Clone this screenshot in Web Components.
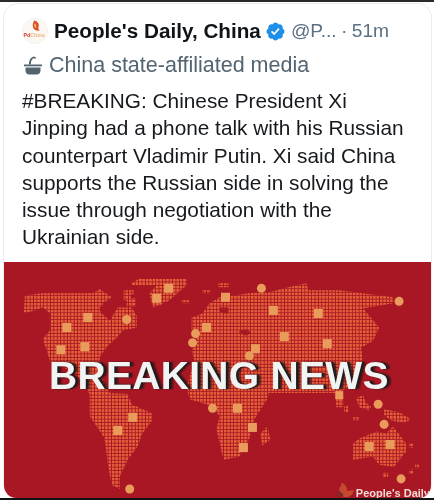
<!DOCTYPE html>
<html>
<head>
<meta charset="utf-8">
<style>
  html, body { margin: 0; padding: 0; background: #fff; }
  body { width: 434px; height: 500px; overflow: hidden; font-family: "Liberation Sans", Arial, sans-serif; }
</style>
</head>
<body>
<tweet-card>
  <tweet-head name="People's Daily, China" handle="@P..." time="51m"></tweet-head>
  <media-label>China state-affiliated media</media-label>
  <tweet-text>#BREAKING: Chinese President Xi<br>Jinping had a phone talk with his Russian<br>counterpart Vladimir Putin. Xi said China<br>supports the Russian side in solving the<br>issue through negotiation with the<br>Ukrainian side.</tweet-text>
  <news-image headline="BREAKING NEWS" credit="People's Daily"></news-image>
</tweet-card>

<script>
class TweetCard extends HTMLElement {
    constructor() {
        super();
        this.attachShadow({ mode: 'open' });
        this.shadowRoot.innerHTML = `
            <style>
                :host {
                    display: block;
                    height: 500px;
                    box-sizing: border-box;
                    border-top: 2px solid #2a2a2a;
                    border-bottom: 2px solid #111;
                    padding: 1px 2px 0 3px;
                    background: #fff;
                    filter: blur(0.4px);
                }
                .card {
                    height: 100%;
                    box-sizing: border-box;
                    border: 1px solid #ececec;
                    border-bottom: 0;
                    border-radius: 15px 15px 13px 13px;
                    display: flex;
                    flex-direction: column;
                    overflow: hidden;
                }
            </style>
            <div class="card"><slot></slot></div>
        `;
    }
}

class TweetHead extends HTMLElement {
    constructor() {
        super();
        this.attachShadow({ mode: 'open' });
        this.shadowRoot.innerHTML = `
            <style>
                :host {
                    display: flex;
                    align-items: center;
                    height: 26px;
                    padding: 14px 0 0 18px;
                    font-size: 20.7px;
                    white-space: nowrap;
                }
                .logo { width: 26px; height: 26px; flex: none; margin-right: 6px; }
                .name { font-weight: bold; color: #0f1419; }
                .tick { width: 21px; height: 21px; flex: none; margin: 0 5px 0 4px; }
                .meta { color: #5b7083; font-size: 19.2px; word-spacing: -1px; }
            </style>
            <svg class="logo" viewBox="0 0 26 26">
                <circle cx="13" cy="13" r="12.6" fill="#fbf8f4" stroke="#f0ebe5" stroke-width=".6"/>
                <path d="M12 2.500c3.600.5 5.600 3.300 4.600 6.300-.5 1.500-.1 2.800 1 3.900-3 .5-6-.8-6.700-3.700-.6-2.500.5-4.800 1.100-6.500z" fill="#d9542b"/>
                <path d="M12.500 5.500c1.800.8 2.100 2.600 1 4.400-1.100-.9-1.700-2.600-1-4.400z" fill="#f3c16c"/>
                <text x="1.600" y="18.600" font-size="5.200" font-weight="bold" font-family="Liberation Sans, sans-serif"><tspan fill="#d23a2a">Pd</tspan><tspan fill="#eab985">China</tspan></text>
            </svg>
            <span class="name"></span>
            <svg class="tick" viewBox="0 0 24 24"><path fill="#1d8fe8" d="M22.25 12c0-1.43-.88-2.67-2.19-3.34.46-1.39.2-2.9-.81-3.91s-2.52-1.27-3.91-.81c-.66-1.31-1.91-2.19-3.34-2.19s-2.67.88-3.33 2.19c-1.4-.46-2.91-.2-3.92.81s-1.26 2.52-.8 3.91c-1.31.67-2.2 1.91-2.2 3.34s.89 2.67 2.2 3.34c-.46 1.39-.21 2.9.8 3.91s2.52 1.26 3.91.81c.67 1.31 1.91 2.19 3.34 2.19s2.68-.88 3.34-2.19c1.39.45 2.9.2 3.91-.81s1.27-2.52.81-3.91c1.31-.67 2.19-1.91 2.19-3.34zm-11.71 4.2L6.8 12.46l1.41-1.42 2.26 2.26 4.8-5.23 1.47 1.36-6.2 6.77z"/></svg>
            <span class="meta"></span>
        `;
    }

    connectedCallback() {
        this.shadowRoot.querySelector('.name').textContent = this.getAttribute('name');
        this.shadowRoot.querySelector('.meta').textContent = `${this.getAttribute('handle')} · ${this.getAttribute('time')}`;
    }
}

class MediaLabel extends HTMLElement {
    constructor() {
        super();
        this.attachShadow({ mode: 'open' });
        this.shadowRoot.innerHTML = `
            <style>
                :host {
                    display: flex;
                    align-items: center;
                    height: 26px;
                    padding: 8px 0 0 20px;
                    font-size: 21.5px;
                    color: #536471;
                    white-space: nowrap;
                }
                svg { width: 18px; height: 19px; flex: none; margin-right: 7px; }
            </style>
            <svg viewBox="0 0 18 19">
                <path d="M5 8.500c-.4-3.400 1.200-6.600 4.500-8l2.500.8-.6 1.500-1.700-.5c-2.200 1.100-3 3.300-2.700 6.200z" fill="#536471"/>
                <rect x="0" y="8.500" width="18" height="1.800" fill="#536471"/>
                <path d="M1.500 11.500h15v3.200c0 2.300-1.600 3.800-3.800 3.800H5.300c-2.200 0-3.800-1.500-3.800-3.800z" fill="#536471"/>
            </svg>
            <span><slot></slot></span>
        `;
    }
}

class TweetText extends HTMLElement {
    constructor() {
        super();
        this.attachShadow({ mode: 'open' });
        this.shadowRoot.innerHTML = `
            <style>
                :host {
                    display: block;
                    padding: 9px 0 0 18px;
                    height: 175px;
                    font-size: 20.800px;
                    line-height: 27.300px;
                    color: #16191d;
                    white-space: nowrap;
                }
            </style>
            <slot></slot>
        `;
    }
}

class NewsImage extends HTMLElement {
    constructor() {
        super();
        this.attachShadow({ mode: 'open' });
        this.shadowRoot.innerHTML = `
            <style>
                :host {
                    display: block;
                    position: relative;
                    flex: 1;
                    background: #a91724;
                    overflow: hidden;
                }
                svg { display: block; width: 100%; height: 100%; }
                .headline {
                    position: absolute;
                    left: 45px;
                    top: 91px;
                    font-size: 39px;
                    line-height: 46px;
                    font-weight: bold;
                    letter-spacing: .3px;
                    color: #f2f3f3;
                    white-space: nowrap;
                    text-shadow: 2px 0 1px #1d1d1d, 4px 0 2px rgba(20,20,20,.7);
                }
                .credit {
                    position: absolute;
                    right: 1px;
                    bottom: -1px;
                    font-size: 11px;
                    font-weight: bold;
                    color: #f1dcd6;
                    white-space: nowrap;
                }
            </style>
            <svg viewBox="4 262 428 234" preserveAspectRatio="none">
                <defs>
                    <pattern id="dots" patternUnits="userSpaceOnUse" width="3.4" height="3.4">
                        <rect width="2.5" height="2.5" fill="#e5623a"/>
                    </pattern>
                </defs>
                <g fill="url(#dots)">
                    <!-- north america -->
                    <path d="M24 312L25 295 43 293 93 293 100 289 112 297 103 303 102 313 110 320 118 307 132 307 137 315 137 327 123 330 117 337 108 345 100 356 100 372 110 392 128 393 132 403 152 412 152 420 142 433 138 445 128 458 120 475 120 487 112 483 108 462 105 437 90 415 90 393 75 372 50 360 43 338 50 330 50 313 43 307 28 312z"/>
                    <!-- greenland and arctic -->
                    <path d="M132 283L140 278 187 278 187 285 170 300 160 305 153 307 150 293 157 285 132 285z"/>
                    <path d="M124 290h10v4h-3v4h5v8h-9v-6h-3zM182 300h8v3h-8z"/>
                    <!-- eurasia, africa -->
                    <path d="M192 317L203 313 210 303 220 297 250 293 270 292 289 287 307 283 309 290 340 290 394 297 394 303 364 308 380 327 374 340 362 347 364 362 350 385 340 392 300 392 269 392 269 396 255 418 250 437 240 455 224 458 217 428 220 415 213 405 190 398 187 385 195 360 192 350 198 340 192 330z"/>
                    <path d="M268 425L271 438 263 444 261 432zM219 283h10v4h-10zM203 290h8v3h-8z"/>
                    <!-- islands and australia -->
                    <path d="M337 392h7v14h-7zM345 405h4v6h-4zM357 397l7-3 3 8 5 3-2 4-10-3zM354 416h6v3h-6z"/>
                    <path d="M385 408L400 411 412 418 405 422 392 419 385 414z"/>
                    <path d="M354 442L360 437 377 430 387 432 394 425 407 442 407 450 395 465 380 463 374 455 354 458z"/>
                    <path d="M384 471h5v4h-5zM410 442h4v4h-4zM416 463h4v3h-4zM410 468h4v4h-4z"/>
                </g>
                <!-- seas cut out of the land mass -->
                <g fill="#a91724">
                    <path d="M220 307h9v6h-5l-4-2zM240 330l8-1 4 4-6 2-6-2zM248 362l6 2-2 6-5-3z"/>
                    <path d="M100 306h5v5h-5z"/>
                </g>
                <g fill="#e99b5b">
                    <rect x="62.500" y="322.500" width="9" height="9"/><rect x="83.500" y="312.500" width="9" height="9"/>
                    <rect x="56.500" y="344.500" width="9" height="9"/><rect x="80.500" y="341.500" width="9" height="9"/>
                    <rect x="152.500" y="293.500" width="9" height="9"/><rect x="164.500" y="283.500" width="9" height="9"/>
                    <rect x="202.500" y="322.500" width="9" height="9"/><rect x="221.500" y="292.500" width="9" height="9"/>
                    <rect x="269.500" y="305.500" width="9" height="9"/><rect x="314.500" y="308.500" width="9" height="9"/>
                    <rect x="280.500" y="331.500" width="9" height="9"/><rect x="323.500" y="338.500" width="9" height="9"/>
                    <rect x="251.500" y="343.500" width="9" height="9"/><rect x="128.500" y="411.500" width="9" height="9"/>
                    <rect x="113.500" y="424.500" width="9" height="9"/><rect x="233.500" y="402.500" width="9" height="9"/>
                    <rect x="248.500" y="421.500" width="9" height="9"/><rect x="239.500" y="441.500" width="9" height="9"/>
                    <rect x="336" y="390" width="8" height="8"/><rect x="365.500" y="440.500" width="9" height="9"/>
                    <rect x="386.500" y="438.500" width="9" height="9"/>
                    <circle cx="127" cy="319" r="4.500"/><circle cx="196" cy="333" r="4.500"/><circle cx="193" cy="342" r="4.500"/>
                    <circle cx="262" cy="288" r="4.500"/><circle cx="400" cy="301" r="4.500"/><circle cx="250" cy="355" r="4.500"/>
                    <circle cx="130" cy="487" r="4.500"/><circle cx="213" cy="407" r="4.500"/><circle cx="379" cy="403" r="4.500"/>
                    <circle cx="385" cy="423" r="4.500"/><circle cx="402" cy="477" r="4.500"/>
                </g>
                <!-- watermark flame -->
                <path d="M342 481c4 1 6 4 6 8 3 0 5-1 7-1-1 4-4 7-8 7-5 0-7-3-7-7 0-3 3-4 2-7z" fill="#c4492f"/>
                <path d="M340 489c-2 2-2 5 1 6 2 .5 3-1 3-3z" fill="#7c2a2a"/>
            </svg>
            <div class="headline"></div>
            <div class="credit"></div>
        `;
    }

    connectedCallback() {
        this.shadowRoot.querySelector('.headline').textContent = this.getAttribute('headline');
        this.shadowRoot.querySelector('.credit').textContent = this.getAttribute('credit');
    }
}

customElements.define('tweet-card', TweetCard);
customElements.define('tweet-head', TweetHead);
customElements.define('media-label', MediaLabel);
customElements.define('tweet-text', TweetText);
customElements.define('news-image', NewsImage);
</script>
</body>
</html>
